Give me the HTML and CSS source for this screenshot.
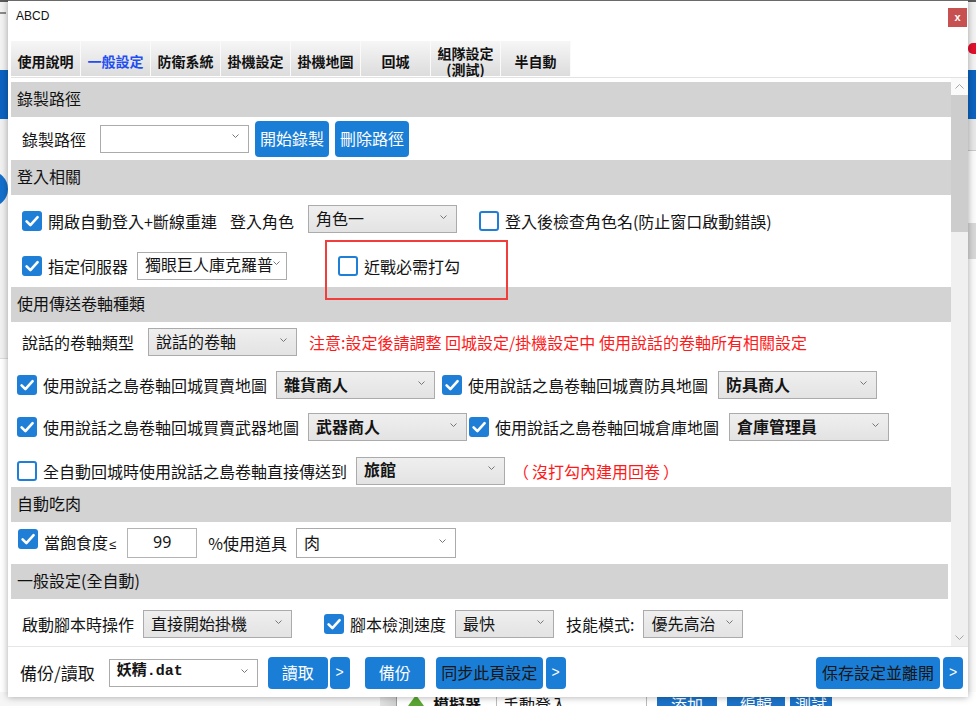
FILE: index.html
```html
<!DOCTYPE html>
<html lang="zh-Hant">
<head>
<meta charset="utf-8">
<title>ABCD</title>
<link rel="stylesheet" href="styles.css">
</head>
<body>
<div class="desktop">
  <div class="bg">
    <div class="bg-top"><span class="bg-dash"></span><span class="bg-red"></span></div>
    <div class="bg-band"></div>
    <div class="bg-main">
      <div class="bg-left">
        <span class="bg-circle"></span>
      </div>
      <div class="bg-right">
        <div class="bgr-grey"></div>
        <div class="bgr-white"></div>
        <div class="bgr-block"></div>
        <div class="bgr-lines"></div>
      </div>
    </div>
    <div class="bg-bottom">
      <div class="bb-fill"></div>
      <div class="bb-cap"></div>
      <div class="bb-name">
        <svg class="bb-icon" width="18" height="12" viewBox="0 0 18 12"><path d="M9 1 L17 12 L1 12 Z" fill="#5aa532"/></svg>
        <span>模擬器</span>
      </div>
      <div class="bb-select"><span>手動登入</span></div>
      <div class="bb-btn bb-w60">添加</div>
      <div class="bb-btn bb-w58">編輯</div>
      <div class="bb-btn bb-w42">測試</div>
    </div>
  </div>

  <div class="dialog">
    <div class="titlebar">
      <span class="title">ABCD</span>
      <span class="close">x</span>
    </div>

    <div class="tabs">
      <div class="tab">使用說明</div>
      <div class="tab active">一般設定</div>
      <div class="tab">防衛系統</div>
      <div class="tab">掛機設定</div>
      <div class="tab">掛機地圖</div>
      <div class="tab">回城</div>
      <div class="tab two"><span class="tl">組隊設定</span><span class="tl">(測試)</span></div>
      <div class="tab">半自動</div>
    </div>

    <div class="panel">
      <div class="content">
        <div class="sec-h">錄製路徑</div>
        <div class="row row-rec">
          <span class="lbl">錄製路徑</span>
          <div class="sel sel-white ml14 w149"><span class="val"></span><svg class="chev" width="7" height="4" viewBox="0 0 7 4"><path d="M0.5 0.5 L3.5 3.5 L6.5 0.5" fill="none" stroke="#777" stroke-width="1"/></svg></div>
          <button class="btn ml6">開始錄製</button>
          <button class="btn ml6">刪除路徑</button>
        </div>

        <div class="sec-h">登入相關</div>
        <div class="row row-login1">
          <span class="cb on"><svg width="20" height="20" viewBox="0 0 20 20"><path d="M4.6 10.4 L8.4 14.2 L15.6 6.2" fill="none" stroke="#fff" stroke-width="2.6" stroke-linecap="round" stroke-linejoin="round"/></svg></span>
          <span class="lbl ml6">開啟自動登入+斷線重連</span>
          <span class="lbl ml13">登入角色</span>
          <div class="sel sel-grey ml14 w149 raise"><span class="val">角色一</span><svg class="chev" width="7" height="4" viewBox="0 0 7 4"><path d="M0.5 0.5 L3.5 3.5 L6.5 0.5" fill="none" stroke="#777" stroke-width="1"/></svg></div>
          <span class="cb off ml22"></span>
          <span class="lbl ml6">登入後檢查角色名(防止窗口啟動錯誤)</span>
        </div>
        <div class="row row-login2">
          <span class="cb on"><svg width="20" height="20" viewBox="0 0 20 20"><path d="M4.6 10.4 L8.4 14.2 L15.6 6.2" fill="none" stroke="#fff" stroke-width="2.6" stroke-linecap="round" stroke-linejoin="round"/></svg></span>
          <span class="lbl ml6">指定伺服器</span>
          <div class="sel sel-white ml9 w150"><span class="val">獨眼巨人庫克羅普</span><svg class="chev" width="7" height="4" viewBox="0 0 7 4"><path d="M0.5 0.5 L3.5 3.5 L6.5 0.5" fill="none" stroke="#777" stroke-width="1"/></svg></div>
          <span class="cb off ml51"></span>
          <span class="lbl ml6">近戰必需打勾</span>
          <div class="redbox"></div>
        </div>

        <div class="sec-h">使用傳送卷軸種類</div>
        <div class="row row-talk">
          <span class="lbl">說話的卷軸類型</span>
          <div class="sel sel-grey ml14 w149"><span class="val">說話的卷軸</span><svg class="chev" width="7" height="4" viewBox="0 0 7 4"><path d="M0.5 0.5 L3.5 3.5 L6.5 0.5" fill="none" stroke="#777" stroke-width="1"/></svg></div>
          <span class="note ml12">注意:設定後請調整 回城設定/掛機設定中 使用說話的卷軸所有相關設定</span>
        </div>
        <div class="row row-a">
          <span class="cb on"><svg width="20" height="20" viewBox="0 0 20 20"><path d="M4.6 10.4 L8.4 14.2 L15.6 6.2" fill="none" stroke="#fff" stroke-width="2.6" stroke-linecap="round" stroke-linejoin="round"/></svg></span>
          <span class="lbl ml6">使用說話之島卷軸回城買賣地圖</span>
          <div class="sel sel-grey ml9 w159"><span class="val b">雜貨商人</span><svg class="chev" width="7" height="4" viewBox="0 0 7 4"><path d="M0.5 0.5 L3.5 3.5 L6.5 0.5" fill="none" stroke="#777" stroke-width="1"/></svg></div>
          <span class="cb on ml7"><svg width="20" height="20" viewBox="0 0 20 20"><path d="M4.6 10.4 L8.4 14.2 L15.6 6.2" fill="none" stroke="#fff" stroke-width="2.6" stroke-linecap="round" stroke-linejoin="round"/></svg></span>
          <span class="lbl ml6">使用說話之島卷軸回城賣防具地圖</span>
          <div class="sel sel-grey ml10 w159"><span class="val b">防具商人</span><svg class="chev" width="7" height="4" viewBox="0 0 7 4"><path d="M0.5 0.5 L3.5 3.5 L6.5 0.5" fill="none" stroke="#777" stroke-width="1"/></svg></div>
        </div>
        <div class="row row-b">
          <span class="cb on"><svg width="20" height="20" viewBox="0 0 20 20"><path d="M4.6 10.4 L8.4 14.2 L15.6 6.2" fill="none" stroke="#fff" stroke-width="2.6" stroke-linecap="round" stroke-linejoin="round"/></svg></span>
          <span class="lbl ml6">使用說話之島卷軸回城買賣武器地圖</span>
          <div class="sel sel-grey ml9 w159"><span class="val b">武器商人</span><svg class="chev" width="7" height="4" viewBox="0 0 7 4"><path d="M0.5 0.5 L3.5 3.5 L6.5 0.5" fill="none" stroke="#777" stroke-width="1"/></svg></div>
          <span class="cb on ml2"><svg width="20" height="20" viewBox="0 0 20 20"><path d="M4.6 10.4 L8.4 14.2 L15.6 6.2" fill="none" stroke="#fff" stroke-width="2.6" stroke-linecap="round" stroke-linejoin="round"/></svg></span>
          <span class="lbl ml6">使用說話之島卷軸回城倉庫地圖</span>
          <div class="sel sel-grey ml10 w160"><span class="val b">倉庫管理員</span><svg class="chev" width="7" height="4" viewBox="0 0 7 4"><path d="M0.5 0.5 L3.5 3.5 L6.5 0.5" fill="none" stroke="#777" stroke-width="1"/></svg></div>
        </div>
        <div class="row row-c">
          <span class="cb off"></span>
          <span class="lbl ml6">全自動回城時使用說話之島卷軸直接傳送到</span>
          <div class="sel sel-grey ml9 w149"><span class="val b">旅館</span><svg class="chev" width="7" height="4" viewBox="0 0 7 4"><path d="M0.5 0.5 L3.5 3.5 L6.5 0.5" fill="none" stroke="#777" stroke-width="1"/></svg></div>
          <span class="note ml8">（<span class="pad">沒打勾內建用回卷</span>）</span>
        </div>

        <div class="sec-h">自動吃肉</div>
        <div class="row row-meat">
          <span class="cb on raise8"><svg width="20" height="20" viewBox="0 0 20 20"><path d="M4.6 10.4 L8.4 14.2 L15.6 6.2" fill="none" stroke="#fff" stroke-width="2.6" stroke-linecap="round" stroke-linejoin="round"/></svg></span>
          <span class="lbl ml6">當飽食度<span class="le">≤</span></span>
          <span class="num ml11">99</span>
          <span class="lbl ml11">%使用道具</span>
          <div class="sel sel-white tall ml9 w160"><span class="val">肉</span><svg class="chev" width="7" height="4" viewBox="0 0 7 4"><path d="M0.5 0.5 L3.5 3.5 L6.5 0.5" fill="none" stroke="#777" stroke-width="1"/></svg></div>
        </div>

        <div class="sec-h short">一般設定(全自動)</div>
        <div class="row row-gen">
          <span class="lbl">啟動腳本時操作</span>
          <div class="sel sel-grey ml9 w149"><span class="val">直接開始掛機</span><svg class="chev" width="7" height="4" viewBox="0 0 7 4"><path d="M0.5 0.5 L3.5 3.5 L6.5 0.5" fill="none" stroke="#777" stroke-width="1"/></svg></div>
          <span class="cb on ml32"><svg width="20" height="20" viewBox="0 0 20 20"><path d="M4.6 10.4 L8.4 14.2 L15.6 6.2" fill="none" stroke="#fff" stroke-width="2.6" stroke-linecap="round" stroke-linejoin="round"/></svg></span>
          <span class="lbl ml6">腳本檢測速度</span>
          <div class="sel sel-grey ml9 w99"><span class="val">最快</span><svg class="chev" width="7" height="4" viewBox="0 0 7 4"><path d="M0.5 0.5 L3.5 3.5 L6.5 0.5" fill="none" stroke="#777" stroke-width="1"/></svg></div>
          <span class="lbl ml12">技能模式:</span>
          <div class="sel sel-grey ml9 w100"><span class="val">優先高治</span><svg class="chev" width="7" height="4" viewBox="0 0 7 4"><path d="M0.5 0.5 L3.5 3.5 L6.5 0.5" fill="none" stroke="#777" stroke-width="1"/></svg></div>
        </div>
        <div class="row row-more"></div>
      </div>

      <div class="scrollbar">
        <div class="sb-btn"><svg width="9" height="5" viewBox="0 0 9 5"><path d="M0.5 4.5 L4.5 0.5 L8.5 4.5" fill="none" stroke="#a6a6a6" stroke-width="1"/></svg></div>
        <div class="sb-thumb"></div>
        <div class="sb-track"></div>
        <div class="sb-btn"><svg width="9" height="5" viewBox="0 0 9 5"><path d="M0.5 0.5 L4.5 4.5 L8.5 0.5" fill="none" stroke="#a6a6a6" stroke-width="1"/></svg></div>
      </div>
    </div>

    <div class="footer">
      <span class="flbl">備份/讀取</span>
      <div class="sel sel-white fsel ml14 w149"><span class="val mono">妖精.dat</span><svg class="chev" width="7" height="4" viewBox="0 0 7 4"><path d="M0.5 0.5 L3.5 3.5 L6.5 0.5" fill="none" stroke="#777" stroke-width="1"/></svg></div>
      <button class="fbtn ml10 w60">讀取</button>
      <button class="fbtn arrow ml2">&gt;</button>
      <button class="fbtn ml15 w60">備份</button>
      <button class="fbtn dark ml11 w107">同步此頁設定</button>
      <button class="fbtn arrow ml3">&gt;</button>
      <span class="spacer"></span>
      <button class="fbtn dark w124">保存設定並離開</button>
      <button class="fbtn arrow ml3">&gt;</button>
    </div>
  </div>
</div>
</body>
</html>
```

FILE: styles.css
```css
* { box-sizing: border-box; }
html, body { margin: 0; padding: 0; }
body {
  width: 976px;
  height: 706px;
  overflow: hidden;
  background: #fff;
  font-family: "Noto Sans CJK TC", "Noto Sans", sans-serif;
  color: #141414;
}
.desktop { position: relative; width: 976px; height: 706px; overflow: hidden; }

/* ---------- background application ---------- */
.bg { display: flex; flex-direction: column; height: 706px; border-top: 2px solid #5c5c5c; }
.bg-top { height: 68px; background: #f3f3f3; display: flex; justify-content: space-between; align-items: flex-start; }
.bg-dash { width: 6px; height: 2px; background: #8a8a8a; margin-top: 10px; }
.bg-red { width: 8px; height: 11px; background: #e2102c; border-radius: 5px 0 0 5px; margin-top: 41px; }
.bg-band { height: 49px; background: #0c63c0; }
.bg-main { flex: 1; display: flex; justify-content: space-between; }
.bg-left { width: 8px; height: 240px; background: #f1f1f1; display: flex; align-items: flex-start; overflow: hidden; border-bottom: 1px solid #dcdcdc; }
.bg-circle { flex: none; width: 36px; height: 36px; border-radius: 50%; background: #1570cc; margin: 52px 0 0 -28px; }
.bg-right { width: 10px; display: flex; flex-direction: column; }
.bgr-grey { height: 32px; background: #e8e8e8; border-bottom: 1px solid #c9c9c9; }
.bgr-white { height: 72px; background: #fbfbfb; }
.bgr-block { height: 36px; background: #d8d8d8; }
.bgr-lines { flex: 1; background: #fbfbfb; border-top: 38px solid #fbfbfb; }
.bg-bottom { height: 14px; display: flex; align-items: flex-start; background: #fff; overflow: hidden; font-weight: bold; font-size: 16px; line-height: 20px; }
.bb-fill { width: 380px; height: 14px; background: #f6f6f6; }
.bb-cap { width: 17px; height: 14px; background: linear-gradient(90deg, #e2e2e2, #cfcfcf); border-right: 1px solid #9c9c9c; }
.bb-name { width: 100px; height: 14px; display: flex; align-items: flex-start; gap: 8px; padding: 2px 0 0 10px; border-right: 1px solid #bbb; }
.bb-icon { flex: none; margin-top: 0; }
.bb-select { width: 150px; height: 14px; padding: 2px 0 0 6px; font-weight: normal; border-right: 1px solid #bbb; }
.bb-btn { height: 14px; margin-left: 10px; background: #1b72c8; color: #fff; text-align: center; padding-top: 2px; font-weight: normal; }
.bb-w60 { width: 60px; }
.bb-w58 { width: 58px; }
.bb-w42 { width: 42px; margin-left: 5px; }

/* ---------- dialog ---------- */
.dialog {
  position: absolute;
  left: 8px;
  top: 0;
  width: 960px;
  height: 697px;
  background: #fff;
  border-top: 1px solid #6a6a6a;
  box-shadow: 0 0 7px rgba(0, 0, 0, 0.35);
  display: flex;
  flex-direction: column;
}
.titlebar { height: 40px; flex: none; display: flex; justify-content: space-between; align-items: flex-start; }
.title { font-family: "Liberation Sans", Arial, sans-serif; font-size: 12px; line-height: 14px; margin: 8px 0 0 8px; color: #111; }
.close {
  width: 19px; height: 19px; margin: 7px 1px 0 0;
  background: #c75050; color: #fff;
  font-family: "Liberation Sans", Arial, sans-serif; font-size: 11px; font-weight: bold;
  display: flex; align-items: center; justify-content: center; padding-bottom: 2px;
}

.tabs { height: 36px; flex: none; display: flex; padding-left: 3px; align-items: flex-start; }
.tab {
  width: 70px; height: 35px; flex: none;
  background: linear-gradient(#f6f6f6, #dcdcdc);
  border-right: 1px solid #fafafa;
  font-size: 14px; font-weight: bold; line-height: 16px;
  display: flex; flex-direction: column; align-items: center; justify-content: center; text-align: center;
  padding-top: 5px; color: #111;
}
.tab.active { color: #1f4ff2; }
.tl { display: block; line-height: 16px; height: 16px; }

.panel { height: 569px; flex: none; margin-left: 3px; border-top: 1px solid #e2e2e2; display: flex; }
.content { flex: 1; overflow: hidden; padding-top: 4px; min-width: 0; }
.scrollbar { width: 17px; flex: none; display: flex; flex-direction: column; background: #f0f0f0; }
.sb-btn { height: 17px; display: flex; align-items: center; justify-content: center; background: #f0f0f0; }
.sb-btn:first-child { background: #fafafa; }
.sb-thumb { height: 137px; background: #cdcdcd; }
.sb-track { flex: 1; }

.sec-h {
  height: 35px; background: #d3d3d3;
  font-size: 16px; line-height: 20px; padding: 6px 0 0 6px; color: #111;
}
.sec-h.short { margin-right: 3px; }

.row { display: flex; align-items: center; font-size: 16px; line-height: 20px; position: relative; }
.row-rec { height: 43px; padding-left: 11px; }
.row-login1 { height: 46px; padding: 6px 0 0 11px; }
.row-login2 { height: 46px; padding: 3px 0 0 11px; }
.row-talk { height: 38px; padding: 2px 0 0 11px; }
.row-a { height: 46px; padding: 4px 0 0 6px; }
.row-b { height: 41px; padding: 1px 0 0 6px; }
.row-c { height: 40px; padding: 7px 0 0 6px; }
.row-meat { height: 42px; padding: 0 0 0 7px; }
.row-gen { height: 48px; padding: 2px 0 0 11px; }
.row-more { height: 40px; }

.lbl { white-space: nowrap; }
.le { font-family: "Liberation Sans", Arial, sans-serif; font-size: 13px; margin-left: 1px; }
.note { color: #ff1a1a; white-space: nowrap; }
.note .pad { padding: 0 3px; }

.cb { width: 20px; height: 20px; flex: none; border-radius: 3px; display: block; }
.cb svg { display: block; }
.cb.on { background: #1f7fd6; }
.cb.off { border: 2px solid #1f7fd6; background: #fff; }
.raise8 { margin-bottom: 8px; }

.sel {
  height: 28px; flex: none; display: flex; align-items: center; justify-content: space-between;
  padding: 0 9px 3px 7px; border: 1px solid #ababab; font-size: 16px; line-height: 20px;
  white-space: nowrap; overflow: hidden;
}
.sel .chev { flex: none; margin-bottom: 2px; }
.sel-white { background: #fff; }
.sel-grey { background: linear-gradient(#efefef, #e3e3e3); }
.sel.tall { height: 30px; }
.raise { margin-bottom: 4px; }
.val.b { font-weight: bold; }
.val.mono { font-family: "Liberation Mono", "Noto Sans CJK TC", monospace; font-weight: bold; font-size: 15px; }

.num {
  width: 70px; height: 30px; flex: none; border: 1px solid #b4b4b4; background: #fff;
  display: flex; align-items: center; justify-content: center; padding-bottom: 2px;
  font-family: "Noto Sans", sans-serif; font-size: 16px;
}

.btn {
  height: 36px; padding: 0 5px 2px; border: 0; border-radius: 4px;
  background: #1b7ed6; color: #fff; flex: none;
  font-family: "Noto Sans CJK TC", sans-serif; font-size: 16px; line-height: 20px;
}

.redbox {
  position: absolute; left: 314px; top: -1px; width: 183px; height: 60px;
  border: 2px solid #f23d3d; pointer-events: none;
}

.footer {
  height: 51px; flex: none; border-top: 1px solid #e6e6e6;
  display: flex; align-items: center; padding: 2px 5px 0 12px;
  font-size: 16px; line-height: 20px;
}
.flbl { font-size: 17px; white-space: nowrap; }
.fsel { height: 28px; }
.fbtn {
  height: 32px; flex: none; border: 0; border-radius: 4px; padding: 0 0 2px;
  background: #1b7ed6; color: #fff;
  font-family: "Noto Sans CJK TC", sans-serif; font-size: 16px; line-height: 20px;
}
.fbtn.dark { color: #161616; }
.fbtn.arrow { width: 20px; font-family: "Liberation Sans", Arial, sans-serif; font-size: 14px; }
.spacer { flex: 1; }

.w60 { width: 60px; }
.w99 { width: 99px; }
.w100 { width: 100px; }
.w107 { width: 107px; }
.w124 { width: 124px; }
.w149 { width: 149px; }
.w150 { width: 150px; }
.w159 { width: 159px; }
.w160 { width: 160px; }

.ml2 { margin-left: 2px; }
.ml3 { margin-left: 3px; }
.ml6 { margin-left: 6px; }
.ml7 { margin-left: 7px; }
.ml8 { margin-left: 8px; }
.ml9 { margin-left: 9px; }
.ml10 { margin-left: 10px; }
.ml11 { margin-left: 11px; }
.ml12 { margin-left: 12px; }
.ml13 { margin-left: 13px; }
.ml14 { margin-left: 14px; }
.ml15 { margin-left: 15px; }
.ml22 { margin-left: 22px; }
.ml32 { margin-left: 32px; }
.ml51 { margin-left: 51px; }
```
